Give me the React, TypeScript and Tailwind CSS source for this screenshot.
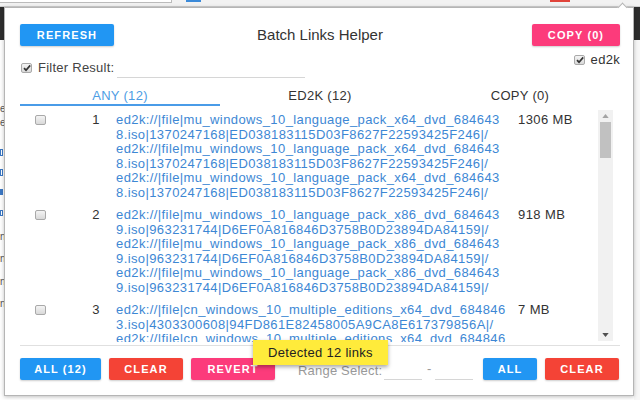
import React from "react";

const FONT = { fontFamily: '"Liberation Sans", Arial, sans-serif' };

const rows = [
  {
    n: 1,
    link: "ed2k://|file|mu_windows_10_language_pack_x64_dvd_6846438.iso|1370247168|ED038183115D03F8627F22593425F246|/",
    cut: 55,
    size: "1306 MB",
  },
  {
    n: 2,
    link: "ed2k://|file|mu_windows_10_language_pack_x86_dvd_6846439.iso|963231744|D6EF0A816846D3758B0D23894DA84159|/",
    cut: 55,
    size: "918 MB",
  },
  {
    n: 3,
    link: "ed2k://|file|cn_windows_10_multiple_editions_x64_dvd_6848463.iso|4303300608|94FD861E82458005A9CA8E617379856A|/",
    cut: 59,
    size: "7 MB",
  },
];

function Box({ checked }: { checked?: boolean }) {
  return (
    <span className="relative inline-block w-[11px] h-[10px] rounded-[2px] border border-[#a9a9a9] bg-gradient-to-b from-[#f4f4f4] to-[#d9d9d9] shrink-0">
      {checked && (
        <svg viewBox="0 0 10 10" className="absolute left-[0px] top-[-1px] w-[10px] h-[10px]">
          <path d="M2 5.2 L4 7.2 L8.2 2.4" fill="none" stroke="#333" strokeWidth="1.7" />
        </svg>
      )}
    </span>
  );
}

function Btn({ label, color, w }: { label: string; color: string; w: string }) {
  return (
    <div
      className={`${w} ${color} h-[22px] rounded-[2px] flex items-center justify-center text-white text-[11px] font-bold tracking-[1.1px] whitespace-nowrap shadow-[0_1px_2px_rgba(0,0,0,0.2)] shrink-0`}
    >
      {label}
    </div>
  );
}

export default function App() {
  return (
    <div className="relative w-[640px] h-[400px] bg-white overflow-hidden" style={FONT}>
      {/* browser chrome behind popup */}
      <div className="absolute left-0 top-0 w-[640px] h-[7px] bg-[#f2f2f2] border-b border-[#cfcfcf]">
        <div className="absolute left-0 top-0 w-[172px] h-[3px] bg-white border-b border-r border-[#bbb]" />
        <div className="absolute left-[186px] top-0 w-[15px] h-[2px] bg-[#3b8ad9]" />
        <div className="absolute left-[550px] top-0 w-[20px] h-[2px] bg-[#e0443a]" />
      </div>
      <div className="absolute left-0 top-[7px] w-[4px] h-[33px] bg-[#2e2e2e]" />
      <div className="absolute left-[634px] top-[7px] w-[6px] h-[33px] bg-[#2e2e2e]" />
      <div className="absolute left-[634px] top-[40px] w-[6px] h-[360px] bg-[#f7f7f7]" />
      <div className="absolute left-0 top-[104px] text-[10px] leading-[10px] text-[#555]">e</div>
      <div className="absolute left-0 top-[118px] text-[10px] leading-[10px] text-[#555]">e</div>
      <div className="absolute left-0 top-[149px] w-[3px] h-[7px] border border-[#3b78c4]" />
      <div className="absolute left-0 top-[169px] w-[3px] h-[7px] border border-[#3b78c4]" />
      <div className="absolute left-0 top-[189px] w-[3px] h-[6px] bg-[#3b78c4]" />
      <div className="absolute left-0 top-[210px] w-[3px] h-[6px] border border-[#3b78c4]" />
      <div className="absolute left-0 top-[232px] text-[10px] leading-[10px] text-[#555]">n</div>
      <div className="absolute left-0 top-[254px] text-[10px] leading-[10px] text-[#555]">n</div>
      <div className="absolute left-0 top-[277px] text-[10px] leading-[10px] text-[#555]">n</div>
      <div className="absolute left-0 top-[299px] text-[10px] leading-[10px] text-[#555]">n</div>

      {/* popup */}
      <div className="absolute left-[4px] top-[7px] w-[630px] h-[389px] bg-white border border-[#b5b5b5] shadow-[0_1px_4px_rgba(0,0,0,0.25)] pl-[15px] pr-[13px] pt-[16px]">
        <div className="absolute left-[614px] top-[-4px] w-[7px] h-[7px] rotate-45 bg-white border-l border-t border-[#b5b5b5]" />

        {/* header */}
        <div className="grid grid-cols-[1fr_auto_1fr] items-center h-[22px]">
          <div className="justify-self-start">
            <Btn label="REFRESH" color="bg-[#2196f3]" w="w-[94px]" />
          </div>
          <div className="text-[15px] text-[#333] leading-[18px]">Batch Links Helper</div>
          <div className="justify-self-end">
            <Btn label="COPY (0)" color="bg-[#fc3b7b]" w="w-[88px]" />
          </div>
        </div>

        {/* filter row */}
        <div className="flex justify-between h-[32px]">
          <div className="flex items-center self-end h-[20px]">
            <span className="ml-[1px]">
              <Box checked />
            </span>
            <span className="ml-[6px] text-[13px] tracking-[0.25px] text-[#444] leading-[14px]">Filter Result:</span>
            <div className="ml-[3px] w-[188px] h-[20px] border-b border-[#d6d6d6]" />
          </div>
          <div className="flex items-center mt-[7px] h-[14px] self-start">
            <Box checked />
            <span className="ml-[6px] text-[13px] tracking-[0.3px] text-[#333] leading-[14px]">ed2k</span>
          </div>
        </div>

        {/* tabs */}
        <div className="grid grid-cols-3 text-[13px] tracking-[0.3px]">
          <div className="pt-[11px] pb-[1px] leading-[14px] text-center text-[#4d9de4] border-b-2 border-[#4a9ce8]">
            ANY (12)
          </div>
          <div className="pt-[11px] pb-[1px] leading-[14px] text-center text-[#333] border-b-2 border-transparent">
            ED2K (12)
          </div>
          <div className="pt-[11px] pb-[1px] leading-[14px] text-center text-[#333] border-b-2 border-transparent">
            COPY (0)
          </div>
        </div>

        {/* list */}
        <div className="mt-[3px] w-[593px] h-[233px] flex">
          <div className="flex-1 overflow-hidden">
            {rows.map((r) => (
              <div key={r.n} className="flex py-[4px] text-[13px] tracking-[0.4px] leading-[14.5px]">
                <div className="pl-[15px] h-[14.5px] flex items-center">
                  <Box />
                </div>
                <div className="w-[54px] text-right text-[#333]">{r.n}</div>
                <div className="ml-[16px] w-[390px] text-[#3d87d4] whitespace-nowrap">
                  {[0, 1, 2].map((k) => (
                    <div key={k}>
                      <div>{r.link.slice(0, r.cut)}</div>
                      <div>{r.link.slice(r.cut)}</div>
                    </div>
                  ))}
                </div>
                <div className="ml-[12px] text-[#333] whitespace-nowrap">{r.size}</div>
              </div>
            ))}
          </div>
          <div className="w-[15px] mt-[1px] mb-[1px] bg-[#f1f1f1] flex flex-col items-center">
            <svg viewBox="0 0 8 5" className="w-[7px] h-[4px] mt-[4px]">
              <path d="M0 5 L4 0 L8 5 Z" fill="#a3a3a3" />
            </svg>
            <div className="w-[11px] h-[36px] mt-[4px] bg-[#c1c1c1]" />
            <div className="flex-1" />
            <svg viewBox="0 0 8 5" className="w-[7px] h-[4px] mb-[4px]">
              <path d="M0 0 L8 0 L4 5 Z" fill="#505050" />
            </svg>
          </div>
        </div>
        <div className="mt-[3px] h-px bg-[#e0e0e0]" />

        {/* bottom controls */}
        <div className="mt-[12px] flex items-center h-[22px]">
          <Btn label="ALL (12)" color="bg-[#2196f3]" w="w-[81px]" />
          <div className="ml-[8px] shrink-0">
            <Btn label="CLEAR" color="bg-[#f44336]" w="w-[74px]" />
          </div>
          <div className="ml-[8px] shrink-0">
            <Btn label="REVERT" color="bg-[#fc3b7b]" w="w-[84px]" />
          </div>
          <span className="ml-[23px] w-[84px] shrink-0 whitespace-nowrap text-[13px] tracking-[0.2px] text-[#9a9a9a] leading-[14px] mt-[3px]">
            Range Select:
          </span>
          <div className="ml-[2px] w-[38px] h-[22px] shrink-0 border-b border-[#d6d6d6]" />
          <span className="ml-[5px] w-[4px] shrink-0 text-[13px] text-[#9a9a9a] leading-[14px]">-</span>
          <div className="ml-[4px] w-[38px] h-[22px] shrink-0 border-b border-[#d6d6d6]" />
          <div className="ml-[10px] shrink-0">
            <Btn label="ALL" color="bg-[#2196f3]" w="w-[54px]" />
          </div>
          <div className="ml-[8px] shrink-0">
            <Btn label="CLEAR" color="bg-[#f44336]" w="w-[74px]" />
          </div>
        </div>

        {/* toast */}
        <div className="absolute left-[248px] top-[332px] w-[135px] h-[25px] bg-[#ffeb3b] shadow-[0_2px_4px_rgba(0,0,0,0.35)] flex items-center justify-center text-[13px] tracking-[0.3px] text-[#222] leading-[14px]">
          Detected 12 links
        </div>
      </div>
    </div>
  );
}
